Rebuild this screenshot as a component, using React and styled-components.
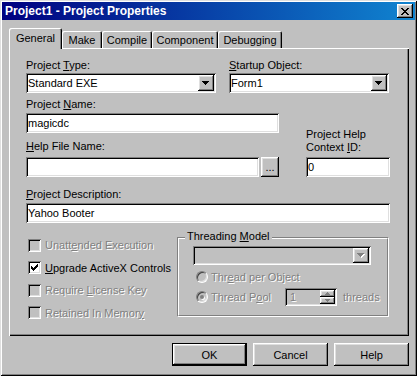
import React from 'react';
import styled, { createGlobalStyle, css } from 'styled-components';

const GlobalStyle = createGlobalStyle`
  html, body {
    margin: 0;
    padding: 0;
    background: #c0c0c0;
    overflow: hidden;
  }
  body {
    font-family: "Liberation Sans", Arial, sans-serif;
    font-size: 11px;
    color: #000;
  }
`;

// classic 3d bevels
const raised = css`
  box-shadow: inset -1px -1px #000, inset 1px 1px #fff, inset -2px -2px #808080, inset 2px 2px #dfdfdf;
`;
const sunken = css`
  box-shadow: inset 1px 1px #808080, inset -1px -1px #fff, inset 2px 2px #000, inset -2px -2px #dfdfdf;
`;

const Window = styled.div`
  width: 417px;
  height: 376px;
  box-sizing: border-box;
  padding: 2px;
  background: #c0c0c0;
  box-shadow: inset 1px 1px #dfdfdf, inset -1px -1px #000, inset 2px 2px #fff, inset -2px -2px #808080;
  display: flex;
  flex-direction: column;
`;

const TitleBar = styled.div`
  height: 18px;
  display: flex;
  align-items: center;
  justify-content: space-between;
  padding: 0 2px 0 3px;
  background: linear-gradient(to right, #000080, #1084d0);
  color: #fff;
  font-weight: bold;
  font-size: 12px;
`;

const CloseButton = styled.div`
  width: 16px;
  height: 14px;
  background: #c0c0c0;
  ${raised};
  display: flex;
  align-items: center;
  justify-content: center;
`;

const Body = styled.div`
  padding: 8px 6px 0 7px;
  display: flex;
  flex-direction: column;
`;

const TabStrip = styled.div`
  display: flex;
  align-items: flex-end;
  height: 20px;
`;

const Tab = styled.div`
  width: ${p => p.$w}px;
  height: ${p => (p.$active ? 21 : 17)}px;
  margin-bottom: ${p => (p.$active ? -1 : 0)}px;
  position: relative;
  z-index: ${p => (p.$active ? 1 : 0)};
  box-sizing: border-box;
  background: #c0c0c0;
  border-radius: 2px 2px 0 0;
  box-shadow: inset 1px 1px #fff, inset -1px 0 #000, inset -2px 0 #808080;
  display: flex;
  align-items: center;
  justify-content: center;
  padding-bottom: ${p => (p.$active ? 2 : 0)}px;
`;

const Panel = styled.div`
  width: 400px;
  height: 288px;
  box-sizing: border-box;
  padding: 11px 0 0 17px;
  box-shadow: inset 1px 1px #fff, inset -1px -1px #000, inset -2px -2px #808080;
`;

const Row = styled.div`
  display: flex;
  align-items: ${p => p.$align || 'flex-start'};
  gap: ${p => p.$gap || 0}px;
  margin-top: ${p => p.$mt || 0}px;
`;

const Field = styled.div`
  display: flex;
  flex-direction: column;
  width: ${p => p.$w}px;
  margin-top: ${p => p.$mt || 0}px;
`;

const Label = styled.div`
  line-height: 13px;
  white-space: nowrap;
  margin-top: ${p => p.$mt || 0}px;
  margin-bottom: ${p => p.$mb ?? 1}px;
`;

const Key = styled.span`
  text-decoration: underline;
`;

const Dim = styled.span`
  color: #808080;
  text-shadow: 1px 1px 0 #fff;
`;

const TextBox = styled.div`
  width: ${p => (p.$w ? `${p.$w}px` : 'auto')};
  flex: ${p => (p.$w ? 'none' : 1)};
  height: ${p => p.$h || 20}px;
  box-sizing: border-box;
  background: ${p => (p.$disabled ? '#c0c0c0' : '#fff')};
  ${sunken};
  display: flex;
  align-items: center;
  justify-content: space-between;
  padding: 0 2px;
  white-space: nowrap;
`;

const DropButton = styled.div`
  width: 16px;
  height: ${p => p.$h || 16}px;
  background: #c0c0c0;
  ${raised};
  display: flex;
  align-items: center;
  justify-content: center;
`;

const BrowseButton = styled.div`
  width: 18px;
  height: 20px;
  background: #c0c0c0;
  ${raised};
  display: flex;
  align-items: center;
  justify-content: center;
  line-height: 1;
`;

const Bottom = styled.div`
  display: flex;
  margin-top: 8px;
`;

const CheckList = styled.div`
  width: 151px;
  box-sizing: border-box;
  padding: 3px 0 0 2px;
  display: flex;
  flex-direction: column;
`;

const CheckRow = styled.div`
  height: 22.5px;
  display: flex;
  align-items: center;
  gap: 4px;
  white-space: nowrap;
`;

const CheckBox = styled.div`
  width: 13px;
  height: 13px;
  box-sizing: border-box;
  background: ${p => (p.$disabled ? '#c0c0c0' : '#fff')};
  ${sunken};
  display: flex;
  align-items: center;
  justify-content: center;
`;

const GroupBox = styled.div`
  position: relative;
  width: 212px;
  height: 80px;
  box-sizing: border-box;
  margin-top: 6px;
  border: 1px solid;
  border-color: #808080 #fff #fff #808080;
`;

const GroupInner = styled.div`
  height: 100%;
  box-sizing: border-box;
  border: 1px solid;
  border-color: #fff #808080 #808080 #fff;
  padding: 7px 0 0 14px;
`;

const GroupTitle = styled.div`
  position: absolute;
  top: -8px;
  left: 7px;
  padding: 0 2px;
  line-height: 13px;
  background: #c0c0c0;
`;

const RadioRow = styled.div`
  display: flex;
  align-items: center;
  height: ${p => p.$h}px;
  margin-top: ${p => p.$mt}px;
  padding-left: 3px;
  white-space: nowrap;
`;

const Radio = styled.div`
  width: 12px;
  height: 12px;
  box-sizing: border-box;
  border-radius: 50%;
  border: 1px solid;
  border-color: #808080 #fff #fff #808080;
  background: #c0c0c0;
  box-shadow: inset 1px 1px #404040, inset -1px -1px #dfdfdf;
  display: flex;
  align-items: center;
  justify-content: center;
  margin-right: 3px;
`;

const RadioDot = styled.div`
  width: 4px;
  height: 4px;
  border-radius: 50%;
  background: #808080;
  box-shadow: 1px 1px #fff;
`;

const RadioLabel = styled.div`
  width: ${p => (p.$w ? `${p.$w}px` : 'auto')};
`;

const Spin = styled.div`
  width: 52px;
  height: 18px;
  box-sizing: border-box;
  background: #c0c0c0;
  ${sunken};
  display: flex;
  padding: 2px;
`;

const SpinValue = styled.div`
  flex: 1;
  padding-left: 3px;
  display: flex;
  align-items: center;
`;

const SpinButtons = styled.div`
  width: 15px;
  display: flex;
  flex-direction: column;
`;

const SpinButton = styled.div`
  flex: 1;
  background: #c0c0c0;
  ${raised};
  display: flex;
  align-items: center;
  justify-content: center;
`;

const Threads = styled.div`
  margin-left: 6px;
`;

const ButtonRow = styled.div`
  display: flex;
  justify-content: flex-end;
  gap: 6px;
  margin-top: 7px;
`;

const Button = styled.div`
  width: 75px;
  height: 23px;
  box-sizing: border-box;
  background: #c0c0c0;
  ${raised};
  border: ${p => (p.$default ? '1px solid #000' : 'none')};
  display: flex;
  align-items: center;
  justify-content: center;
`;

// pixel glyph drawn from 1px rows: [x, y, length]
const Pixels = ({ w, h, rows, color }) => (
  <svg width={w} height={h} viewBox={`0 0 ${w} ${h}`} shapeRendering="crispEdges">
    {rows.map(([x, y, len], i) => (
      <rect key={i} x={x} y={y} width={len} height={1} fill={color} />
    ))}
  </svg>
);

const closeRows = [
  [0, 0, 2], [6, 0, 2], [1, 1, 2], [5, 1, 2], [2, 2, 4], [3, 3, 2],
  [2, 4, 4], [1, 5, 2], [5, 5, 2], [0, 6, 2], [6, 6, 2],
];
const checkRows = [
  [6, 0, 1], [5, 1, 2], [0, 2, 1], [4, 2, 3], [0, 3, 2], [3, 3, 3],
  [0, 4, 5], [1, 5, 3], [2, 6, 1],
];

const Arrow = ({ disabled }) => (
  <svg width="8" height="5" viewBox="0 0 8 5" shapeRendering="crispEdges">
    {disabled && <path d="M1 1h7v1h-1v1h-1v1h-1v1h-1v-1h-1v-1h-1v-1h-1z" fill="#fff" />}
    <path d="M0 0h7v1h-1v1h-1v1h-1v1h-1v-1h-1v-1h-1v-1h-1z" fill={disabled ? '#808080' : '#000'} />
  </svg>
);

const SmallArrow = ({ up }) => (
  <Pixels
    w={5}
    h={3}
    color="#808080"
    rows={up ? [[2, 0, 1], [1, 1, 3], [0, 2, 5]] : [[0, 0, 5], [1, 1, 3], [2, 2, 1]]}
  />
);

const tabs = [
  { name: 'General', w: 53, active: true },
  { name: 'Make', w: 40 },
  { name: 'Compile', w: 50 },
  { name: 'Component', w: 66 },
  { name: 'Debugging', w: 64 },
];

const options = [
  { label: <>Unatt<Key>e</Key>nded Execution</>, disabled: true },
  { label: <><Key>U</Key>pgrade ActiveX Controls</>, checked: true },
  { label: <>Require <Key>L</Key>icense Key</>, disabled: true },
  { label: <>Retained In Memor<Key>y</Key></>, disabled: true },
];

const Combo = ({ w, h, value, disabled }) => (
  <TextBox $w={w} $h={h} $disabled={disabled}>
    <span>{value}</span>
    <DropButton $h={h ? h - 4 : 16}>
      <Arrow disabled={disabled} />
    </DropButton>
  </TextBox>
);

export default function App() {
  return (
    <>
      <GlobalStyle />
      <Window>
        <TitleBar>
          <span>Project1 - Project Properties</span>
          <CloseButton>
            <Pixels w={8} h={7} rows={closeRows} color="#000" />
          </CloseButton>
        </TitleBar>
        <Body>
          <TabStrip>
            {tabs.map(t => (
              <Tab key={t.name} $w={t.w} $active={t.active}>{t.name}</Tab>
            ))}
          </TabStrip>
          <Panel>
            <Row $gap={13}>
              <Field $w={190}>
                <Label>Project <Key>T</Key>ype:</Label>
                <Combo w={190} value="Standard EXE" />
              </Field>
              <Field $w={160}>
                <Label><Key>S</Key>tartup Object:</Label>
                <Combo w={160} value="Form1" />
              </Field>
            </Row>

            <Row $gap={27} $align="flex-end" $mt={5}>
              <Field $w={253}>
                <Label $mb={2}>Project <Key>N</Key>ame:</Label>
                <TextBox $w={253}>magicdc</TextBox>
                <Label $mt={7} $mb={4}><Key>H</Key>elp File Name:</Label>
                <Row $gap={2}>
                  <TextBox $w={233} />
                  <BrowseButton>...</BrowseButton>
                </Row>
              </Field>
              <Field $w={84}>
                <Label $mb={3}>Project Help<br />Context <Key>I</Key>D:</Label>
                <TextBox $w={84}>0</TextBox>
              </Field>
            </Row>

            <Field $w={364} $mt={11}>
              <Label $mb={2}><Key>P</Key>roject Description:</Label>
              <TextBox $w={364}>Yahoo Booter</TextBox>
            </Field>

            <Bottom>
              <CheckList>
                {options.map((o, i) => (
                  <CheckRow key={i}>
                    <CheckBox $disabled={o.disabled}>
                      {o.checked && <Pixels w={7} h={7} rows={checkRows} color="#000" />}
                    </CheckBox>
                    {o.disabled ? <Dim>{o.label}</Dim> : <span>{o.label}</span>}
                  </CheckRow>
                ))}
              </CheckList>

              <GroupBox>
                <GroupTitle>Threading <Key>M</Key>odel</GroupTitle>
                <GroupInner>
                  <Combo w={178} h={19} disabled />
                  <RadioRow $h={14} $mt={5}>
                    <Radio />
                    <RadioLabel><Dim>Thr<Key>e</Key>ad per Object</Dim></RadioLabel>
                  </RadioRow>
                  <RadioRow $h={18} $mt={4}>
                    <Radio><RadioDot /></Radio>
                    <RadioLabel $w={74}><Dim>Thread P<Key>o</Key>ol</Dim></RadioLabel>
                    <Spin>
                      <SpinValue><Dim>1</Dim></SpinValue>
                      <SpinButtons>
                        <SpinButton><SmallArrow up /></SpinButton>
                        <SpinButton><SmallArrow /></SpinButton>
                      </SpinButtons>
                    </Spin>
                    <Threads><Dim>threads</Dim></Threads>
                  </RadioRow>
                </GroupInner>
              </GroupBox>
            </Bottom>
          </Panel>
          <ButtonRow>
            <Button $default>OK</Button>
            <Button>Cancel</Button>
            <Button>Help</Button>
          </ButtonRow>
        </Body>
      </Window>
    </>
  );
}
